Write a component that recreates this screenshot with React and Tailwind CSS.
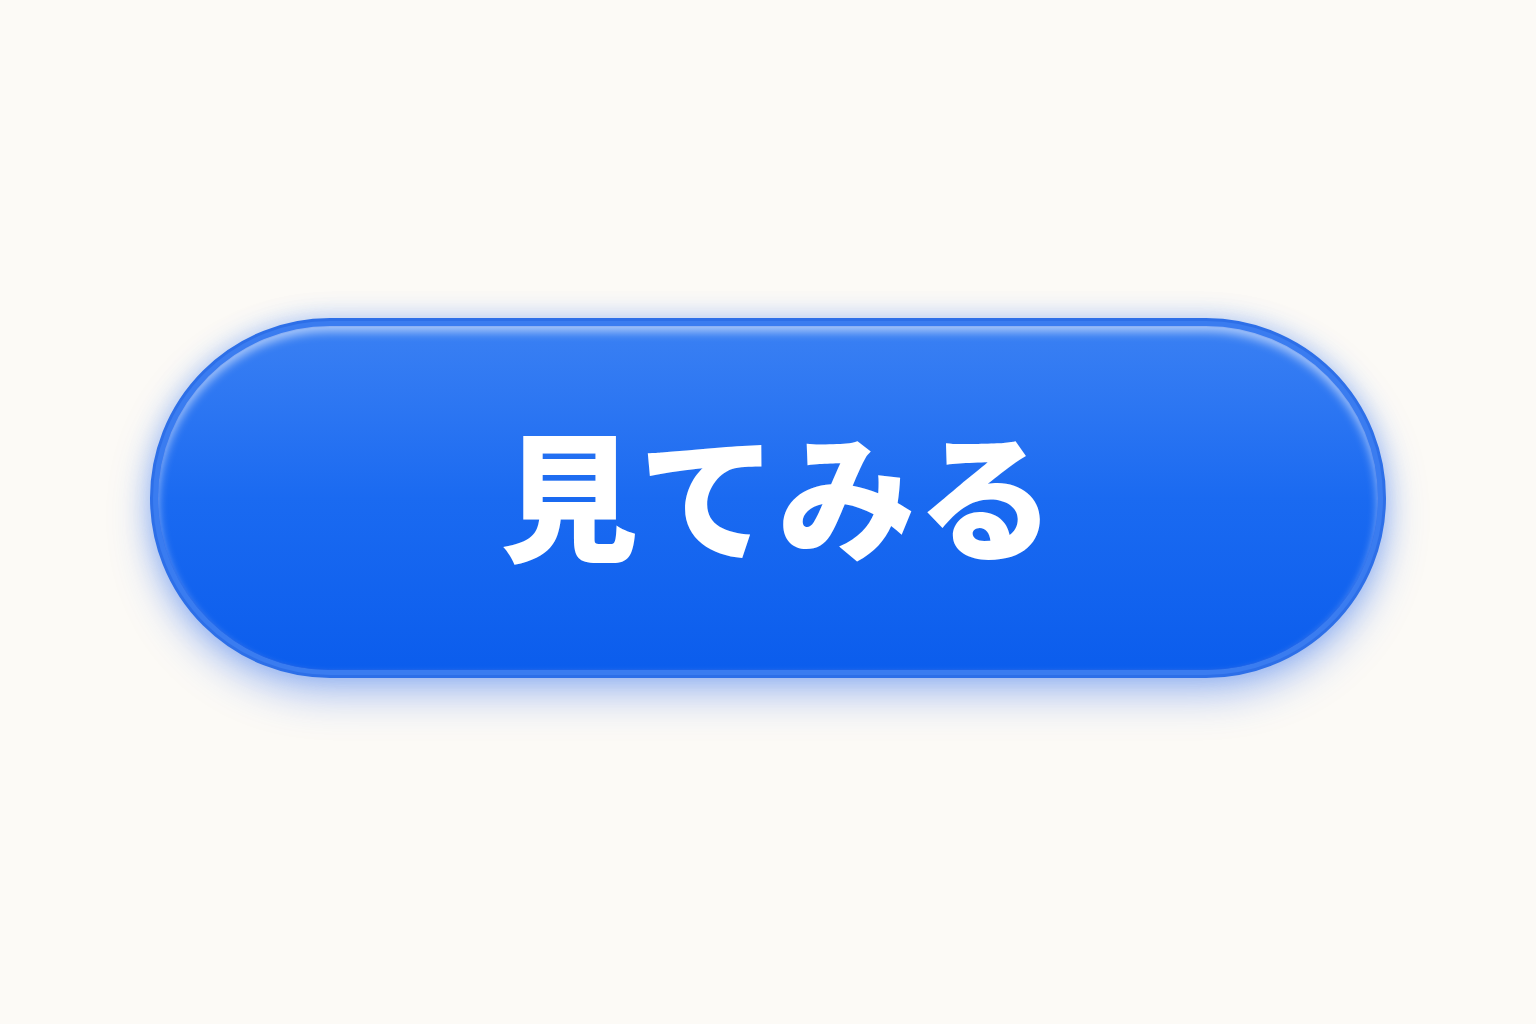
export default function App() {
  return (
    <div className="flex h-[1024px] w-[1536px] items-center justify-center bg-[#fcfaf6] pb-[28px]">
      <button
        type="button"
        className="flex h-[360px] w-[1236px] rounded-full border-[3px] border-[#2d6fe8] bg-[#3a7cf0] p-[5px] shadow-[0_18px_40px_rgba(37,99,235,0.35),0_0_24px_rgba(59,130,246,0.35)]"
      >
        <span
          className="flex flex-1 items-center justify-center rounded-full bg-gradient-to-b from-[#3a80f3] via-[#1a6af1] to-[#0b5ded] pb-[16px] pl-[20px] text-[138px] font-black leading-none tracking-[1px] text-white shadow-[inset_0_6px_10px_rgba(255,255,255,0.55),inset_0_0_0_1px_rgba(20,90,230,0.6)]"
          style={{ fontFamily: '"Noto Sans CJK JP", "Noto Sans", sans-serif' }}
        >
          見てみる
        </span>
      </button>
    </div>
  );
}
